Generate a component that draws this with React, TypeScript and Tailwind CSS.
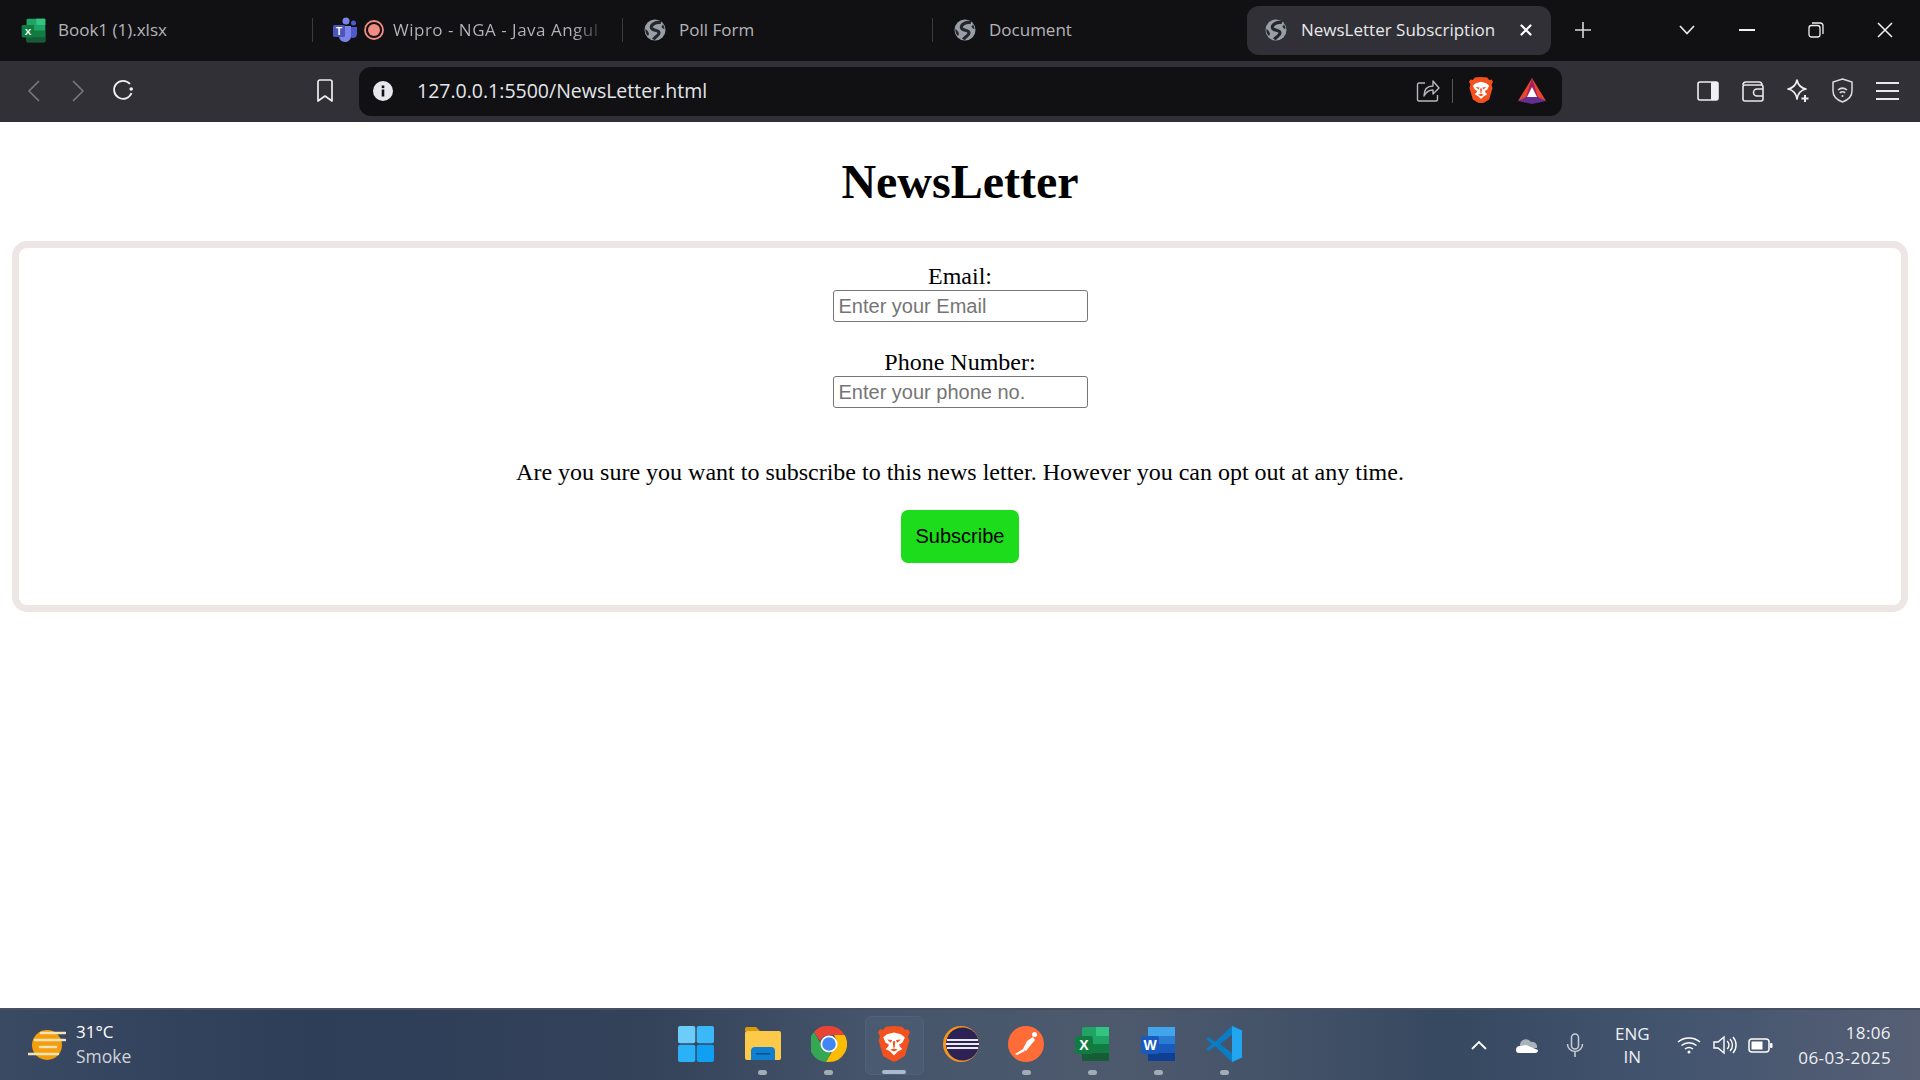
import { FC, ReactNode } from "react";

const uiFont = "font-['Open_Sans','Noto_Sans',sans-serif]";

const Globe: FC = () => (
  <svg width="22" height="22" viewBox="0 0 22 22" className="shrink-0">
    <circle cx="11" cy="11" r="10.500" fill="#9a9ea6" />
    <path d="M17 3.500C12 2.500 6.500 5.500 7.500 9c1 3.200 7.500 1.200 7.500 5 0 3-4 3.500-5.500 6.500" fill="none" stroke="#26272c" strokeWidth="3.200" />
    <path d="M1.500 10c1.500 1 3 2.500 3.500 5l-1 2c-2-2-3-4.500-2.500-7zM20.500 10c-1.500-.3-2.500-1-3-2.500l1.500-2c1 1.500 1.500 3 1.500 4.500z" fill="#26272c" />
  </svg>
);

const BraveLogo: FC<{ size: number }> = ({ size }) => (
  <svg width={size} height={size * 1.12} viewBox="0 0 50 56">
    <path d="M25 0l13 1 4 5 5-1 3 5-3 6 2 7-7 24-12 7-5 2-5-2-12-7L1 23l2-7-3-6 3-5 5 1 4-5z" fill="#f4511e" />
    <path d="M14 13l11-3 11 3 6 5-4 8-5 3 1 3 4 4-7 4-6 6-6-6-7-4 4-4 1-3-5-3-4-8z" fill="#fff" />
    <path d="M14 21l8 1-2 4zM36 21l-8 1 2 4zM23 24h4l-1 10h-2zM19 37l6-2 6 2-6 3z" fill="#f4511e" />
  </svg>
);

const ExcelLogo: FC<{ size: number }> = ({ size }) => (
  <svg width={size} height={size} viewBox="0 0 36 36">
    <rect x="8" y="1" width="27" height="34" rx="2" fill="#21a366" />
    <rect x="22" y="1" width="13" height="9" fill="#33c481" />
    <rect x="8" y="18" width="27" height="9" fill="#107c41" />
    <rect x="8" y="27" width="27" height="8" fill="#185c37" />
    <rect x="1" y="10" width="18" height="18" rx="2" fill="#107c41" />
    <text x="10" y="24" textAnchor="middle" fontSize="14" fontWeight="700" fill="#fff" fontFamily="Liberation Sans">X</text>
  </svg>
);

const WordLogo: FC = () => (
  <svg width="36" height="36" viewBox="0 0 36 36">
    <rect x="8" y="1" width="27" height="34" rx="2" fill="#2b7cd3" />
    <rect x="8" y="1" width="27" height="9" fill="#41a5ee" />
    <rect x="8" y="18" width="27" height="9" fill="#185abd" />
    <rect x="8" y="27" width="27" height="8" fill="#103f91" />
    <rect x="1" y="10" width="18" height="18" rx="2" fill="#185abd" />
    <text x="10" y="24" textAnchor="middle" fontSize="14" fontWeight="700" fill="#fff" fontFamily="Liberation Sans">W</text>
  </svg>
);

const TeamsLogo: FC = () => (
  <svg width="24" height="26" viewBox="0 0 24 26">
    <circle cx="13" cy="4" r="3.500" fill="#7b83eb" />
    <circle cx="20.500" cy="6" r="2.500" fill="#5059c9" />
    <path d="M16 10h8v7c0 2.500-2 4-4 4s-4-2-4-4z" fill="#5059c9" />
    <path d="M6 9h12v10c0 3.500-2.500 6-6 6s-6-3-6-6z" fill="#7b83eb" />
    <rect x="0" y="8" width="12" height="12" rx="1.500" fill="#4b53bc" />
    <text x="6" y="17.500" textAnchor="middle" fontSize="10" fontWeight="700" fill="#fff" fontFamily="Liberation Sans">T</text>
  </svg>
);

const TaskSlot: FC<{ children: ReactNode; open?: boolean; active?: boolean }> = ({ children, open, active }) => (
  <div className="w-[66px] h-[59px] flex flex-col items-center justify-end pb-[1px]">
    <div className={`w-[59px] h-[59px] rounded-md flex flex-col items-center ${active ? "bg-[#4a5a70] border border-[#52617a]" : ""}`}>
      <div className="h-[50px] flex items-center justify-center mt-[2px] shrink-0">{children}</div>
      {open && <div className={`h-[5px] rounded-full mt-[1px] ${active ? "w-[24px] bg-[#a9bccb]" : "w-[9px] bg-[#a3acb6]"}`} />}
    </div>
  </div>
);

const Tab: FC<{ label: string }> = ({ label }) => (
  <div className="w-[310px] h-[24px] flex items-center gap-[13px] pl-[21px] border-l border-[#3a3a40]">
    <Globe />
    <span className="text-[17px] whitespace-nowrap text-[#b4b4ba]">{label}</span>
  </div>
);

const App: FC = () => (
  <div className="w-[1920px] h-[1080px] flex flex-col overflow-hidden bg-white">
    {/* tab strip */}
    <div className={`h-[61px] bg-[#111114] flex items-center pb-[1px] ${uiFont}`}>
      <div className="w-[312px] flex items-center gap-[12px] pl-[21px]">
        <ExcelLogo size={25} />
        <span className="text-[17px] whitespace-nowrap text-[#b4b4ba]">Book1 (1).xlsx</span>
      </div>
      <div className="w-[310px] h-[24px] flex items-center pl-[20px] border-l border-[#3a3a40]">
        <TeamsLogo />
        <svg width="20" height="20" viewBox="0 0 20 20" className="ml-[7px] mr-[9px] shrink-0">
          <circle cx="10" cy="10" r="9" fill="none" stroke="#f28b82" strokeWidth="1.800" />
          <circle cx="10" cy="10" r="6" fill="#f28b82" />
        </svg>
        <span className="text-[17px] tracking-[0.5px] whitespace-nowrap bg-linear-to-r from-[#b4b4ba] from-88% to-[#3a3a3f] bg-clip-text text-transparent">
          Wipro - NGA - Java Angul
        </span>
      </div>
      <Tab label="Poll Form" />
      <Tab label="Document" />
      <div className="w-[304px] h-[49px] ml-[5px] mt-[1px] rounded-[12px] bg-[#303036] flex items-center pl-[18px] pr-[18px] pb-[1px]">
        <Globe />
        <span className="ml-[14px] text-[17px] text-[#e8e8ea] whitespace-nowrap">NewsLetter Subscription</span>
        <svg width="14" height="14" viewBox="0 0 14 14" className="ml-auto" stroke="#fff" strokeWidth="2.200" strokeLinecap="round">
          <path d="M2.500 2.500l9 9M11.500 2.500l-9 9" />
        </svg>
      </div>
      <svg width="18" height="18" viewBox="0 0 18 18" className="ml-[23px]" stroke="#d8d8dc" strokeWidth="1.600">
        <path d="M9 1v16M1 9h16" />
      </svg>
      <svg width="18" height="12" viewBox="0 0 18 12" className="ml-[86px]" fill="none" stroke="#e4e4e8" strokeWidth="1.800">
        <path d="M2 2l7 7.500L16 2" />
      </svg>
      <svg width="16" height="2" viewBox="0 0 16 2" className="ml-[43px]"><rect width="16" height="2" fill="#f2f2f2" /></svg>
      <svg width="16" height="16" viewBox="0 0 16 16" className="ml-[53px]" fill="none" stroke="#eeeeee" strokeWidth="1.300">
        <rect x="1" y="3.500" width="11" height="11.500" rx="2.500" />
        <path d="M4 1h8a3 3 0 0 1 3 3v8" />
      </svg>
      <svg width="16" height="16" viewBox="0 0 16 16" className="ml-[53px]" stroke="#f2f2f2" strokeWidth="1.500">
        <path d="M1 1l14 14M15 1L1 15" />
      </svg>
    </div>

    {/* toolbar */}
    <div className="h-[61px] bg-[#303036] flex items-center">
      <svg width="14" height="24" viewBox="0 0 14 24" className="ml-[27px] mb-[2px]" fill="none" stroke="#77777c" strokeWidth="1.600">
        <path d="M12 2L2 12l10 10" />
      </svg>
      <svg width="14" height="24" viewBox="0 0 14 24" className="ml-[30px] mb-[2px]" fill="none" stroke="#77777c" strokeWidth="1.600">
        <path d="M2 2l10 10L2 22" />
      </svg>
      <svg width="22" height="22" viewBox="0 0 22 22" className="ml-[27px] mb-[4px]" fill="none" stroke="#f0f0f2" strokeWidth="1.800">
        <path d="M19.500 14A9 9 0 1 1 18 5" />
        <circle cx="19.200" cy="10" r="1.800" fill="#f0f0f2" stroke="none" />
      </svg>
      <svg width="18" height="24" viewBox="0 0 18 24" className="ml-[182px] mb-[2px]" fill="none" stroke="#eeeeee" strokeWidth="1.700" strokeLinejoin="round">
        <path d="M2 3a2 2 0 0 1 2-2h10a2 2 0 0 1 2 2v19l-7-5-7 5z" />
      </svg>
      <div className="w-[1203px] h-[49px] ml-[25px] bg-[#111114] rounded-[12px] flex items-center">
        <svg width="20" height="20" viewBox="0 0 20 20" className="ml-[14px] mb-[2px]">
          <circle cx="10" cy="10" r="10" fill="#e8e8ec" />
          <rect x="8.700" y="8.500" width="2.600" height="7" fill="#111114" />
          <rect x="8.700" y="4.500" width="2.600" height="2.600" fill="#111114" />
        </svg>
        <span className={`ml-[24px] mb-[2px] text-[19.500px] text-[#e4e6ea] ${uiFont}`}>127.0.0.1:5500/NewsLetter.html</span>
        <svg width="24" height="24" viewBox="0 0 24 24" className="ml-auto mb-[2px]" fill="none" stroke="#b8b8bc" strokeWidth="1.400" strokeLinejoin="round">
          <path d="M9 4H3a1.500 1.500 0 0 0-1.500 1.500v15A1.500 1.500 0 0 0 3 22h17a1.500 1.500 0 0 0 1.500-1.500V16" />
          <path d="M8 17c0-7 4-10 9-10V2l6 7-6 6V11c-4 0-7 2-9 6z" />
        </svg>
        <div className="w-[1px] h-[24px] bg-[#55555a] ml-[12px] mb-[2px]" />
        <div className="ml-[16px] mb-[3px]"><BraveLogo size={24} /></div>
        <svg width="28" height="26" viewBox="0 0 28 26" className="ml-[25px] mr-[16px] mb-[2px]">
          <path d="M14 0l14 23H0z" fill="#e8452c" />
          <path d="M14 0l7 23H7z" fill="#9e1f63" />
          <path d="M0 23l14-7 14 7-14 3z" fill="#662d91" />
          <path d="M14 9l5 10H9z" fill="#fff" />
        </svg>
      </div>
      <svg width="22" height="20" viewBox="0 0 22 20" className="ml-[135px] mb-[2px]">
        <rect x="1" y="1" width="20" height="18" rx="2" fill="none" stroke="#f0f0f2" strokeWidth="1.600" />
        <rect x="14" y="1" width="7" height="18" rx="1" fill="#f0f0f2" />
      </svg>
      <svg width="23" height="22" viewBox="0 0 23 22" className="ml-[23px] mb-[2px]" fill="none" stroke="#e8e8ea" strokeWidth="1.600">
        <path d="M1 5a3 3 0 0 1 3-3h13a3 3 0 0 1 3 3" />
        <rect x="1" y="5" width="20" height="16" rx="2" />
        <path d="M21 9h-6a2.500 2.500 0 0 0 0 7h6" />
      </svg>
      <svg width="24" height="25" viewBox="0 0 24 25" className="ml-[21px] mb-[2px]" fill="none" stroke="#eeeeee" strokeWidth="1.700" strokeLinejoin="round">
        <path d="M11 2c1 5 4 8 9 9-5 1-8 4-9 10-1-6-4-9-9-10 5-1 8-4 9-9z" />
        <path d="M19 17v7M15.500 20.500h7" strokeWidth="2" />
      </svg>
      <svg width="21" height="25" viewBox="0 0 21 25" className="ml-[22px] mb-[2px]" fill="none" stroke="#dcdce0" strokeWidth="1.500">
        <path d="M10.500 1L20 4v9c0 5-4 9-9.500 11C5 22 1 18 1 13V4z" />
        <path d="M6 12c3-2.500 6-2.500 9 0M7.800 14.800c2-1.500 3.400-1.500 5.400 0" />
        <circle cx="10.500" cy="18" r="1" fill="#dcdce0" stroke="none" />
      </svg>
      <svg width="23" height="20" viewBox="0 0 23 20" className="ml-[23px] mb-[2px]" stroke="#e8e8ea" strokeWidth="1.800">
        <path d="M0 2h23M0 10h23M0 18h23" />
      </svg>
    </div>

    {/* page */}
    <main className="flex-1 bg-white px-[12px] font-['Liberation_Serif',serif] text-black">
      <h1 className="text-[48px] font-bold text-center mt-[32px] mb-[32px] leading-[55px]">NewsLetter</h1>
      <div className="h-[371px] border-[7px] border-[#eee5e5] rounded-[15px] flex flex-col items-center text-[24px] leading-[28px] pt-[14px]">
        <label>Email:</label>
        <input
          placeholder="Enter your Email"
          className="w-[255px] h-[32px] border border-[#767676] rounded-[3px] px-[5px] font-['Liberation_Sans',sans-serif] text-[20px] placeholder:text-[#757575] outline-none"
        />
        <label className="mt-[26px]">Phone Number:</label>
        <input
          placeholder="Enter your phone no."
          className="w-[255px] h-[32px] border border-[#767676] rounded-[3px] px-[5px] font-['Liberation_Sans',sans-serif] text-[20px] placeholder:text-[#757575] outline-none"
        />
        <p className="mt-[50px]">Are you sure you want to subscribe to this news letter. However you can opt out at any time.</p>
        <button className="mt-[24px] w-[118px] h-[53px] pb-[1px] bg-[#1cdc1c] rounded-[7px] font-['Liberation_Sans',sans-serif] text-[20px] text-black">
          Subscribe
        </button>
      </div>
    </main>

    {/* taskbar */}
    <footer className={`h-[72px] border-t-[2px] border-[#465060] bg-[linear-gradient(90deg,#3a4a63_0%,#2e3d58_16%,#34425a_34%,#45546a_45%,#4d5a6e_58%,#445268_67%,#364860_75%,#445570_88%,#565f74_100%)] grid grid-cols-[1fr_auto_1fr] items-center ${uiFont}`}>
      <div className="flex items-center pl-[28px]">
        <svg width="38" height="32" viewBox="0 0 38 32">
          <circle cx="19" cy="16" r="15" fill="#f59e0b" />
          <path d="M13 4h24M7 11h30M12 18h16M0 25h30" stroke="#f5e2b8" strokeWidth="2.600" strokeLinecap="round" />
        </svg>
        <div className="ml-[10px] mb-[2px] flex flex-col leading-[24px]">
          <span className="text-white text-[17px]">31°C</span>
          <span className="text-[#cfd4da] text-[17.500px]">Smoke</span>
        </div>
      </div>

      <div className="flex items-center pt-[3px]">
        <TaskSlot>
          <svg width="36" height="36" viewBox="0 0 36 36">
            <rect x="0" y="0" width="17.300" height="17.300" rx="2" fill="#6ccdfb" />
            <rect x="18.700" y="0" width="17.300" height="17.300" rx="2" fill="#3bb8f8" />
            <rect x="0" y="18.700" width="17.300" height="17.300" rx="2" fill="#2ab1f7" />
            <rect x="18.700" y="18.700" width="17.300" height="17.300" rx="2" fill="#0f9ff3" />
          </svg>
        </TaskSlot>
        <TaskSlot open>
          <svg width="36" height="34" viewBox="0 0 36 34" className="ml-[1px]">
            <path d="M0 2a2 2 0 0 1 2-2h9l4 4h-15z" fill="#d99a0c" />
            <rect x="0" y="4" width="36" height="29" rx="2" fill="#fcc94a" />
            <path d="M6 33V24a4 4 0 0 1 4-4h16a4 4 0 0 1 4 4v9z" fill="#0f7fd1" />
            <rect x="11" y="26" width="14" height="1.500" fill="#0a4f8a" />
          </svg>
        </TaskSlot>
        <TaskSlot open>
          <svg width="36" height="36" viewBox="0 0 36 36" className="ml-[2px]">
            <path d="M18 0a18 18 0 0 1 15.600 9H18a9 9 0 0 0-8.600 6.300L3 6A18 18 0 0 1 18 0z" fill="#ea4335" />
            <path d="M3 6l7.800 13.500a9 9 0 0 0 9.200 7.300L15 36A18 18 0 0 1 3 6z" fill="#34a853" />
            <path d="M33.600 9a18 18 0 0 1-15.600 27h-3l7.500-13A9 9 0 0 0 25 13l-2-4z" fill="#fbbc04" />
            <circle cx="18" cy="18" r="8.500" fill="#fff" />
            <circle cx="18" cy="18" r="6.800" fill="#4285f4" />
          </svg>
        </TaskSlot>
        <TaskSlot open active>
          <BraveLogo size={32} />
        </TaskSlot>
        <TaskSlot>
          <svg width="36" height="36" viewBox="0 0 36 36" className="ml-[1px]">
            <circle cx="18" cy="18" r="18" fill="#f7941e" />
            <circle cx="19.500" cy="18" r="16.500" fill="#2c2255" />
            <path d="M4 14h31M3 18h33M4 22h31" stroke="#eceaf4" strokeWidth="2" />
          </svg>
        </TaskSlot>
        <TaskSlot open>
          <svg width="36" height="36" viewBox="0 0 36 36">
            <circle cx="18" cy="18" r="18" fill="#ff6c37" />
            <path d="M7 28l8-5 2 2-8 4zM15 23l4-8 6-4 2 3-5 6-4 5z" fill="#fff" />
            <circle cx="26.500" cy="8.500" r="2.500" fill="#fff" />
          </svg>
        </TaskSlot>
        <TaskSlot open>
          <ExcelLogo size={36} />
        </TaskSlot>
        <TaskSlot open>
          <WordLogo />
        </TaskSlot>
        <TaskSlot open>
          <svg width="36" height="36" viewBox="0 0 36 36">
            <path d="M26 0l10 4.500v27L26 36 9 20l-6 5-3-2 6-5-6-5 3-2 6 5z" fill="#0a7cc4" />
            <path d="M26 0l10 4.500v27L26 36z" fill="#22a6f0" />
            <path d="M26 9v18L14 18z" fill="#45546a" />
          </svg>
        </TaskSlot>
      </div>

      <div className="flex items-center justify-end pr-[29px] text-white">
        <svg width="16" height="10" viewBox="0 0 16 10" fill="none" stroke="#ffffff" strokeWidth="1.800"><path d="M1 9l7-7 7 7" /></svg>
        <svg width="24" height="16" viewBox="0 0 24 16" className="ml-[28px]">
          <path d="M5 8a6 6 0 0 1 11-3 5 5 0 0 1 6 6H4z" fill="#a9b1bb" />
          <path d="M1 13a4 4 0 0 1 4-4l6-1 12 5a3 3 0 0 1-3 3H4a3 3 0 0 1-3-3z" fill="#ffffff" />
        </svg>
        <svg width="18" height="24" viewBox="0 0 18 24" className="ml-[27px]" fill="none" stroke="#c8ced6" strokeWidth="1.500">
          <rect x="5.500" y="1" width="7" height="15" rx="3.500" />
          <path d="M1.500 11a7.500 7.500 0 0 0 15 0M9 18.500V24" />
        </svg>
        <div className="ml-[28px] w-[40px] text-center text-[17px] leading-[23px] text-[#eef0f3]">ENG<br />IN</div>
        <svg width="24" height="18" viewBox="0 0 24 18" className="ml-[25px]" fill="none" stroke="#ffffff" strokeWidth="1.500">
          <path d="M1 6c6-5.500 16-5.500 22 0M4.500 9.500c4.500-3.800 10.500-3.800 15 0M8 13c2.500-2 5.500-2 8 0" />
          <circle cx="12" cy="16" r="1.500" fill="#fff" stroke="none" />
        </svg>
        <svg width="24" height="20" viewBox="0 0 24 20" className="ml-[12px]" fill="none" stroke="#ffffff" strokeWidth="1.400">
          <path d="M1 7h4l6-5v16l-6-5H1z" />
          <path d="M14 6a5 5 0 0 1 0 8M17 4a8.500 8.500 0 0 1 0 12M20 2a12 12 0 0 1 0 16" />
        </svg>
        <svg width="25" height="15" viewBox="0 0 25 15" className="ml-[11px]">
          <rect x="1" y="1" width="20" height="13" rx="3" fill="none" stroke="#fff" strokeWidth="1.500" />
          <rect x="3.500" y="3.500" width="11" height="8" fill="#fff" />
          <rect x="22" y="5" width="2.500" height="5" rx="1" fill="#fff" />
        </svg>
        <div className="ml-[25px] text-right text-[17px] tracking-[0.4px] leading-[25px] text-[#eef0f3] whitespace-nowrap -mt-[1px]">18:06<br />06-03-2025</div>
      </div>
    </footer>
  </div>
);

export default App;
